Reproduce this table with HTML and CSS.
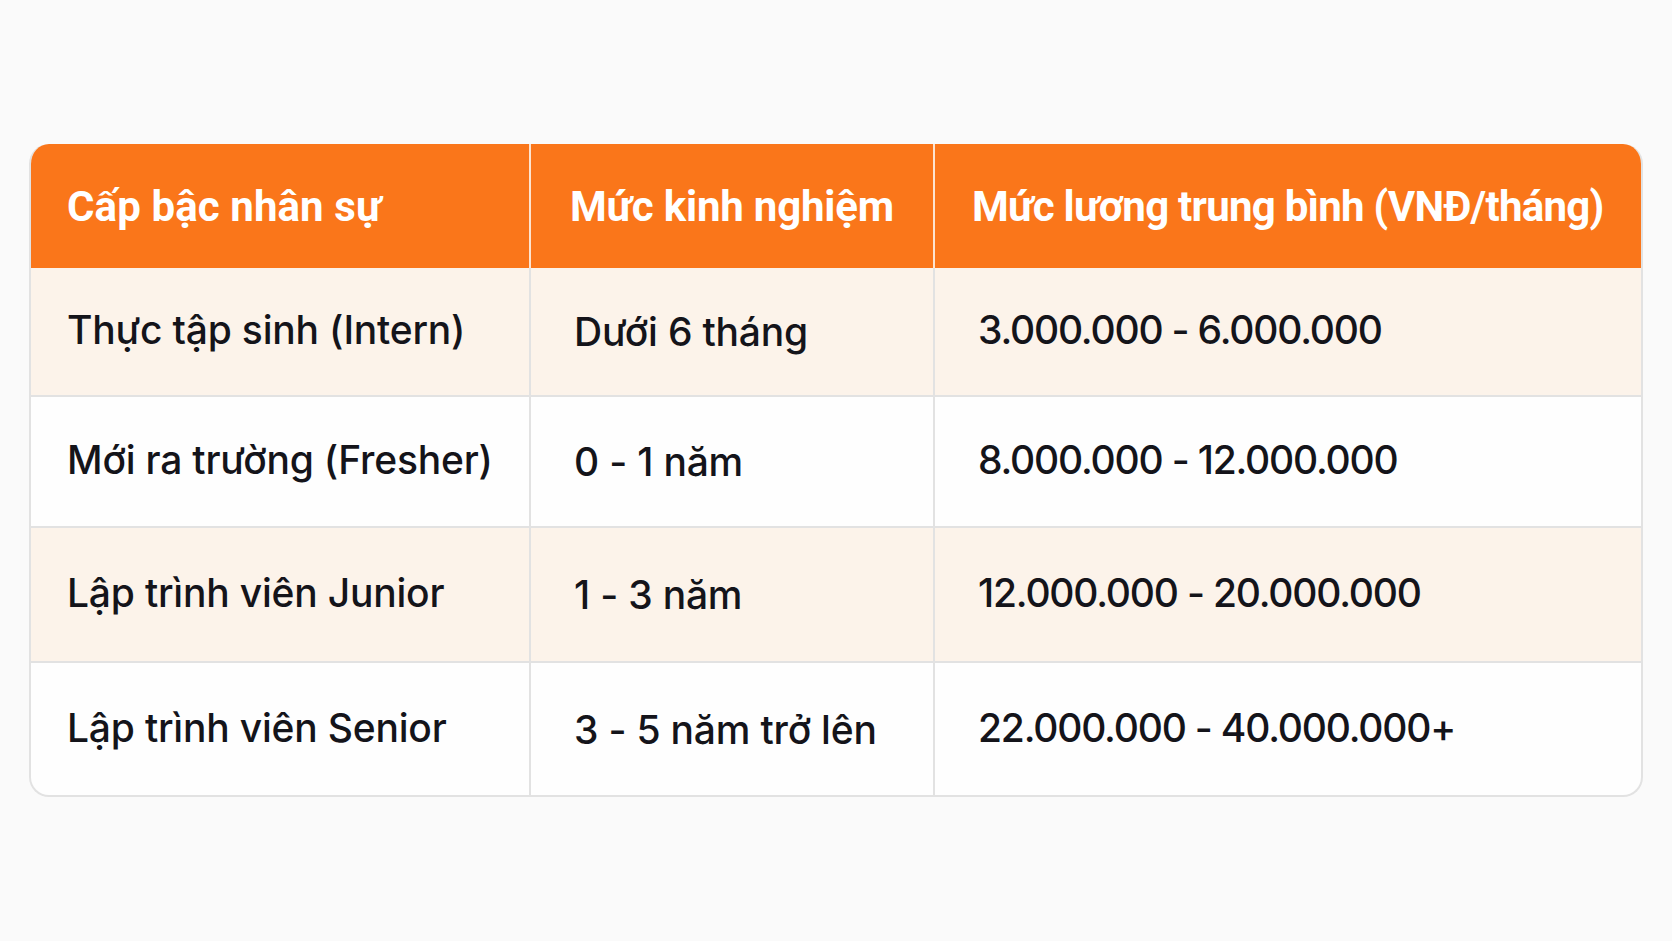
FILE: index.html
```html
<!DOCTYPE html>
<html lang="vi">
<head>
<meta charset="utf-8">
<title>Mức lương</title>
<link rel="stylesheet" href="styles.css">
</head>
<body>
<div class="card">
  <div class="row head">
    <div class="cell c1">Cấp bậc nhân sự</div>
    <div class="cell c2">Mức kinh nghiệm</div>
    <div class="cell c3">Mức lương trung bình (VNĐ/tháng)</div>
  </div>
  <div class="row r1 tint">
    <div class="cell c1">Thực tập sinh (Intern)</div>
    <div class="cell c2">Dưới 6 tháng</div>
    <div class="cell c3">3.000.000 - 6.000.000</div>
  </div>
  <div class="row r2">
    <div class="cell c1">Mới ra trường (Fresher)</div>
    <div class="cell c2">0 - 1 năm</div>
    <div class="cell c3">8.000.000 - 12.000.000</div>
  </div>
  <div class="row r3 tint">
    <div class="cell c1">Lập trình viên Junior</div>
    <div class="cell c2">1 - 3 năm</div>
    <div class="cell c3">12.000.000 - 20.000.000</div>
  </div>
  <div class="row r4">
    <div class="cell c1">Lập trình viên Senior</div>
    <div class="cell c2">3 - 5 năm trở lên</div>
    <div class="cell c3">22.000.000 - 40.000.000+</div>
  </div>
</div>
</body>
</html>
```
FILE: styles.css
```css
html, body {
  margin: 0;
  padding: 0;
}
body {
  background: #fafafa;
  font-family: Inter, "Noto Sans", sans-serif;
  padding: 144px 29px 0 29px;
}
.card {
  width: 1614px;
  box-sizing: border-box;
  border: 2px solid #e2e2e2;
  border-top: none;
  border-radius: 20px;
  overflow: hidden;
  background: #fefefe;
}
.row {
  display: grid;
  grid-template-columns: 498px 404px 1fr;
}
.cell {
  display: flex;
  align-items: center;
  box-sizing: border-box;
}
.cell + .cell {
  border-left: 2px solid #e2e2e2;
}
.head {
  height: 124px;
  background: #fa761a;
  margin: 0 -2px;
  grid-template-columns: 500px 404px 1fr;
}
.head .cell {
  color: #ffffff;
  font-family: Roboto, "Liberation Sans", sans-serif;
  font-weight: 700;
  font-size: 42px;
}
.head .cell + .cell {
  border-left: 2px solid #fde3cf;
}
.head .c1 { padding-left: 38px; letter-spacing: 0.1px; }
.head .c2 { padding-left: 39px; letter-spacing: -0.2px; }
.head .c3 { padding-left: 37px; letter-spacing: -0.75px; }

.row:not(.head) {
  border-top: 2px solid #e2e2e2;
}
.r1 { height: 127px; border-top: none !important; }
.r2 { height: 129px; }
.r3 { height: 133px; }
.r4 { height: 132px; }
.tint { background: #fcf3ea; }

.row:not(.head) .cell {
  color: #14141a;
  font-size: 39px;
  font-weight: 500;
  padding-bottom: 4px;
}
.row:not(.head) .c1 { padding-left: 36px; letter-spacing: -0.2px; }
.row:not(.head) .c2 { padding-left: 43px; padding-top: 2px; padding-bottom: 2px; letter-spacing: -0.2px; }
.row:not(.head) .c3 { padding-left: 43px; letter-spacing: -1.2px; }
```
